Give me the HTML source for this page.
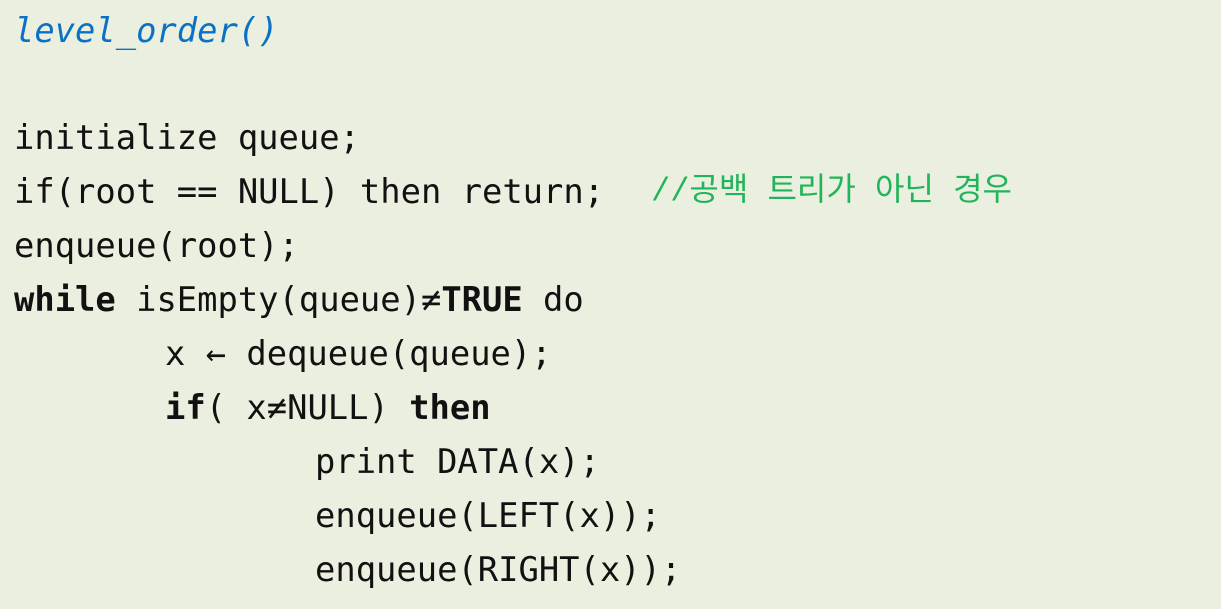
<!DOCTYPE html>
<html><head><meta charset="utf-8"><style>
html,body{margin:0;padding:0}
body{width:1221px;height:609px;background:#ebefdf;position:relative;overflow:hidden;font-family:"DejaVu Sans Mono","Liberation Mono",monospace;font-size:33.8px;color:#111}
.l{position:absolute;height:54px;line-height:54px;white-space:pre}
b{font-weight:bold}
.t{color:#0a72c4;font-style:italic}
.c{color:#22b45a;font-family:"Liberation Mono","Noto Sans CJK KR",monospace;font-size:32px}
</style></head><body>
<div class="l t" style="left:14px;top:4px">level_order()</div>
<div class="l" style="left:14px;top:111px">initialize queue;</div>
<div class="l" style="left:14px;top:165px">if(root == NULL) then return;</div>
<div class="l c" style="left:651px;top:165px">//공백 트리가 아닌 경우</div>
<div class="l" style="left:14px;top:219px">enqueue(root);</div>
<div class="l" style="left:14px;top:273px"><b>while</b> isEmpty(queue)≠<b>TRUE</b> do</div>
<div class="l" style="left:165px;top:327px">x ← dequeue(queue);</div>
<div class="l" style="left:165px;top:381px"><b>if</b>( x≠NULL) <b>then</b></div>
<div class="l" style="left:315px;top:435px">print DATA(x);</div>
<div class="l" style="left:315px;top:489px">enqueue(LEFT(x));</div>
<div class="l" style="left:315px;top:543px">enqueue(RIGHT(x));</div>
</body></html>
